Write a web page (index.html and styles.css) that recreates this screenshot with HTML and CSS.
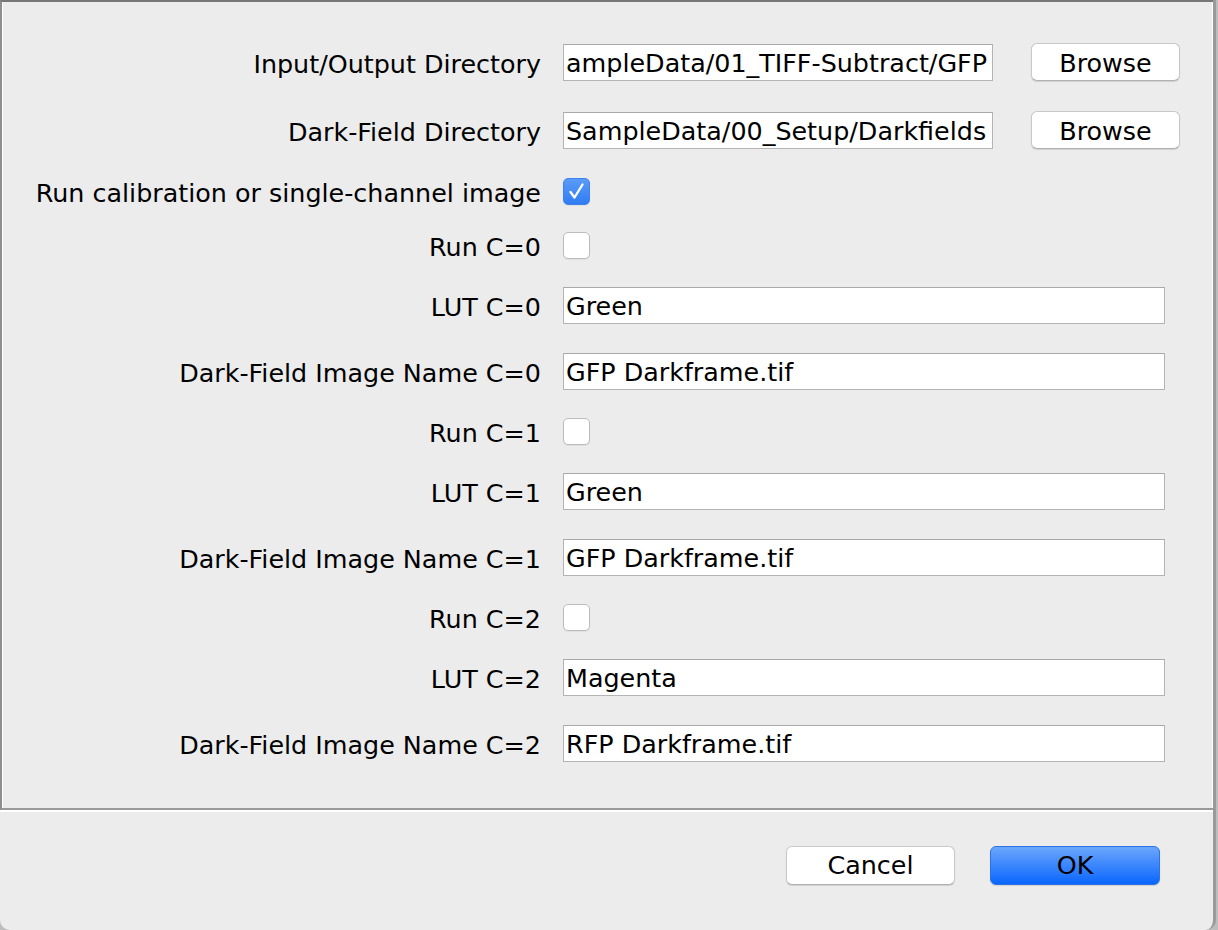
FILE: index.html
```html
<!DOCTYPE html>
<html>
<head>
<meta charset="utf-8">
<title>Dialog</title>
<link rel="stylesheet" href="styles.css">
</head>
<body>
<div class="window">
  <div class="panel">
    <div class="row row-btn">
      <label class="lbl">Input/Output Directory</label>
      <div class="ctl">
        <div class="field field-short">ampleData/01_TIFF-Subtract/GFP</div>
        <button class="btn browse">Browse</button>
      </div>
    </div>
    <div class="row row-btn">
      <label class="lbl">Dark-Field Directory</label>
      <div class="ctl">
        <div class="field field-short">SampleData/00_Setup/Darkfields</div>
        <button class="btn browse">Browse</button>
      </div>
    </div>
    <div class="row row-cb">
      <label class="lbl">Run calibration or single-channel image</label>
      <div class="ctl"><span class="cb checked"><svg viewBox="0 0 27 27" width="27" height="27"><polyline points="7.5,14 11.5,19.5 19.5,6.5" fill="none" stroke="#fff" stroke-width="2.3" stroke-linecap="round" stroke-linejoin="round"/></svg></span></div>
    </div>
    <div class="row row-cb">
      <label class="lbl">Run C=0</label>
      <div class="ctl"><span class="cb"></span></div>
    </div>
    <div class="row row-field">
      <label class="lbl">LUT C=0</label>
      <div class="ctl"><div class="field field-long">Green</div></div>
    </div>
    <div class="row row-field">
      <label class="lbl">Dark-Field Image Name C=0</label>
      <div class="ctl"><div class="field field-long">GFP Darkframe.tif</div></div>
    </div>
    <div class="row row-cb">
      <label class="lbl">Run C=1</label>
      <div class="ctl"><span class="cb"></span></div>
    </div>
    <div class="row row-field">
      <label class="lbl">LUT C=1</label>
      <div class="ctl"><div class="field field-long">Green</div></div>
    </div>
    <div class="row row-field">
      <label class="lbl">Dark-Field Image Name C=1</label>
      <div class="ctl"><div class="field field-long">GFP Darkframe.tif</div></div>
    </div>
    <div class="row row-cb">
      <label class="lbl">Run C=2</label>
      <div class="ctl"><span class="cb"></span></div>
    </div>
    <div class="row row-field">
      <label class="lbl">LUT C=2</label>
      <div class="ctl"><div class="field field-long">Magenta</div></div>
    </div>
    <div class="row row-field">
      <label class="lbl">Dark-Field Image Name C=2</label>
      <div class="ctl"><div class="field field-long">RFP Darkframe.tif</div></div>
    </div>
  </div>
  <div class="footer">
    <button class="btn cancel">Cancel</button>
    <button class="btn ok">OK</button>
  </div>
</div>
</body>
</html>
```

FILE: styles.css
```css
html, body {
  margin: 0;
  padding: 0;
}
body {
  background: #bdbdbd;
  font-family: "DejaVu Sans", "Liberation Sans", sans-serif;
  font-size: 25.4px;
  color: #000;
}
.window {
  width: 1216px;
  height: 930px;
  box-sizing: border-box;
  border-right: 3px solid #9a9a9a;
  background: #ececec;
  border-bottom-left-radius: 10px;
  border-bottom-right-radius: 10px;
  overflow: hidden;
  display: flex;
  flex-direction: column;
}
.panel {
  height: 810px;
  box-sizing: border-box;
  border-top: 2px solid #767676;
  border-left: 2px solid #8e8e8e;
  border-bottom: 2px solid #999;
  box-shadow: inset 1px 0 0 #fff, inset -1px 0 0 #fff;
  padding: 26px 0 32px 0;
  display: flex;
  flex-direction: column;
}
.row {
  display: grid;
  grid-template-columns: 539px 1fr;
  column-gap: 22px;
  align-items: center;
}
.row-btn { height: 68px; }
.row-cb { height: 54px; }
.row-field { height: 66px; }
.lbl {
  text-align: right;
  white-space: nowrap;
  line-height: 30px;
  padding-top: 4px;
}
.ctl {
  display: flex;
  align-items: center;
}
.field {
  box-sizing: border-box;
  height: 37px;
  background: #fff;
  border: 1px solid #b4b4b4;
  border-top-color: #a9a9a9;
  padding: 2px 2px 0 2px;
  line-height: 33px;
  white-space: nowrap;
  overflow: hidden;
}
.field-short { width: 430px; }
.field-long { width: 602px; }
.btn {
  font-family: "DejaVu Sans", "Liberation Sans", sans-serif;
  font-size: 25.4px;
  color: #000;
  box-sizing: border-box;
  background: #fff;
  border: 1px solid #c8c8c8;
  border-bottom-color: #b0b0b0;
  border-radius: 6px;
  box-shadow: 0 1px 1px rgba(0,0,0,0.12);
  padding: 2px 0 0 0;
  line-height: 32px;
}
.browse {
  width: 149px;
  height: 38px;
  margin-left: 38px;
}
.cb {
  box-sizing: border-box;
  width: 27px;
  height: 27px;
  border-radius: 5px;
  border: 1px solid #bcbcbc;
  background: #fff;
  box-shadow: 0 1px 1px rgba(0,0,0,0.06);
  display: block;
}
.cb.checked {
  border: 1px solid #3f82ef;
  background: linear-gradient(#5b9bf8, #2f7cf3);
}
.cb svg {
  display: block;
  margin: -1px;
}
.footer {
  flex: 1;
  border-top: 2px solid #fff;
  display: flex;
  justify-content: flex-end;
  align-items: flex-start;
  padding: 34px 53px 0 0;
  gap: 35px;
}
.cancel, .ok {
  height: 39px;
  padding: 0;
  line-height: 35px;
}
.cancel {
  width: 169px;
}
.ok {
  width: 170px;
  border: 1px solid #2a72e8;
  background: linear-gradient(#6ca6fb, #0a66ff);
}
```
